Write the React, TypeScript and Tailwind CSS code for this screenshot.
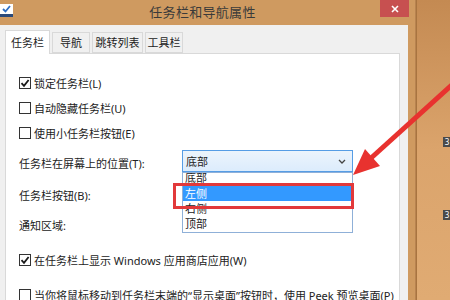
import React from "react";

const Check = ({ checked }: { checked?: boolean }) => (
  <div className="w-[12px] h-[12px] border border-[#333333] bg-white flex items-center justify-center shrink-0">
    {checked && (
      <svg width="10" height="10" viewBox="0 0 10 10">
        <path d="M1.5 5.2 L4 7.8 L8.6 2" fill="none" stroke="#1a1a1a" strokeWidth="1.8" />
      </svg>
    )}
  </div>
);

const CheckRow = ({ checked, label, className }: { checked?: boolean; label: string; className?: string }) => (
  <div className={"flex items-center h-[16px] gap-[3px] " + (className || "")}>
    <Check checked={checked} />
    <span className="whitespace-nowrap">{label}</span>
  </div>
);

export default function App() {
  return (
    <div className="w-[450px] h-[300px] relative overflow-hidden flex bg-[#d9a36b] font-['Noto_Sans','Noto_Sans_CJK_SC',sans-serif] text-[11px] text-[#222222] leading-none">
      {/* window */}
      <div className="w-[416px] h-full flex flex-col bg-[#cf9a60] border-r border-[#b88350]">
        {/* title bar */}
        <div className="h-[25px] flex items-start shrink-0">
          <div className="mt-[4px] w-[13px] h-[13px] bg-white border-b-[3px] border-[#2b4a7a] flex items-center justify-center">
            <svg width="9" height="8" viewBox="0 0 9 8">
              <path d="M1 4 L3.5 6.5 L8 1" fill="none" stroke="#2f6fc4" strokeWidth="1.8" />
            </svg>
          </div>
          <div className="flex-1 text-center pl-[12px] pt-[6px] text-[13px] text-[#3a3a3a] tracking-[0.3px]">任务栏和导航属性</div>
          <div className="w-[29px] h-[17px] bg-[#c75050] mr-[6px] flex items-center justify-center">
            <svg width="8" height="8" viewBox="0 0 8 8">
              <path d="M1 1 L7 7 M7 1 L1 7" stroke="white" strokeWidth="1.6" />
            </svg>
          </div>
        </div>
        {/* client */}
        <div className="flex-1 bg-[#f0f0f0] mr-[7px] pl-[5px] pr-[8px] pt-[4px] flex flex-col">
          <div className="flex items-end h-[24px] relative z-10">
            <div className="w-[45px] h-[24px] bg-white border border-b-0 border-[#d9d9d9] flex items-center justify-center -mb-px">任务栏</div>
            <div className="w-[38px] h-[21px] ml-[2px] bg-[#f0f0f0] border border-[#d9d9d9] flex items-center justify-center">导航</div>
            <div className="w-[51px] h-[21px] ml-[2px] bg-[#f0f0f0] border border-[#d9d9d9] flex items-center justify-center">跳转列表</div>
            <div className="w-[38px] h-[21px] ml-[2px] bg-[#f0f0f0] border border-[#d9d9d9] flex items-center justify-center">工具栏</div>
          </div>
          <div className="flex-1 bg-white border border-[#d9d9d9] pl-[13px] flex flex-col">
            <CheckRow checked label="锁定任务栏(L)" className="mt-[21px]" />
            <CheckRow label="自动隐藏任务栏(U)" className="mt-[9px]" />
            <CheckRow label="使用小任务栏按钮(E)" className="mt-[9px]" />
            <div className="mt-[9px] h-[22px] flex items-center">
              <span className="w-[163px] pt-[5px] whitespace-nowrap">任务栏在屏幕上的位置(T):</span>
              <div className="w-[171px] h-[22px] border border-[#569de5] bg-gradient-to-b from-[#ecf4fc] to-[#dcecfc] flex items-center justify-between pl-[3px] pr-[6px]">
                <span>底部</span>
                <svg width="8" height="5" viewBox="0 0 8 5">
                  <path d="M1 1 L4 4 L7 1" fill="none" stroke="#444" strokeWidth="1.3" />
                </svg>
              </div>
            </div>
            <div className="mt-[12px] h-[22px] flex items-center">
              <span className="whitespace-nowrap">任务栏按钮(B):</span>
            </div>
            <div className="mt-[8px] h-[22px] flex items-center">
              <span className="whitespace-nowrap">通知区域:</span>
            </div>
            <CheckRow checked label="在任务栏上显示 Windows 应用商店应用(W)" className="mt-[16px]" />
            <CheckRow label="当你将鼠标移动到任务栏末端的“显示桌面”按钮时，使用 Peek 预览桌面(P)" className="mt-[19px]" />
          </div>
        </div>
      </div>
      {/* desktop */}
      <div className="flex-1 h-full bg-gradient-to-b from-[#c48a52] via-[#dba46c] to-[#e0ab73] border-l border-[#a8743f] relative">
        <div className="absolute left-[26px] top-[137px] w-[8px] h-[10px] bg-[#4a4a4a] text-[8px] text-white leading-[10px] text-center">3</div>
        <div className="absolute left-[26px] top-[210px] w-[8px] h-[10px] bg-[#4a4a4a] text-[8px] text-white leading-[10px] text-center">3</div>
      </div>

      {/* open dropdown list overlay */}
      <div className="absolute left-[182px] top-[172px] w-[171px] h-[61px] bg-white border border-[#8fb0d8] overflow-hidden flex flex-col">
        <div className="h-[13px] pl-[2px] -mt-[1px] flex items-start">底部</div>
        <div className="h-[16px] pl-[2px] bg-[#3399ff] text-white flex items-center">左侧</div>
        <div className="h-[15px] pl-[2px] flex items-center">右侧</div>
        <div className="h-[15px] pl-[2px] flex items-center">顶部</div>
      </div>
      {/* red highlight rectangle */}
      <div className="absolute left-[173px] top-[183px] w-[181px] h-[26px] border-[3px] border-[#e2393b]" />
      {/* red arrow */}
      <svg className="absolute left-0 top-0 pointer-events-none" width="450" height="300" viewBox="0 0 450 300">
        <line x1="455" y1="82" x2="370" y2="159" stroke="#e8322f" strokeWidth="5" />
        <polygon points="353,175 365,149 380,166" fill="#e8322f" />
      </svg>
    </div>
  );
}
